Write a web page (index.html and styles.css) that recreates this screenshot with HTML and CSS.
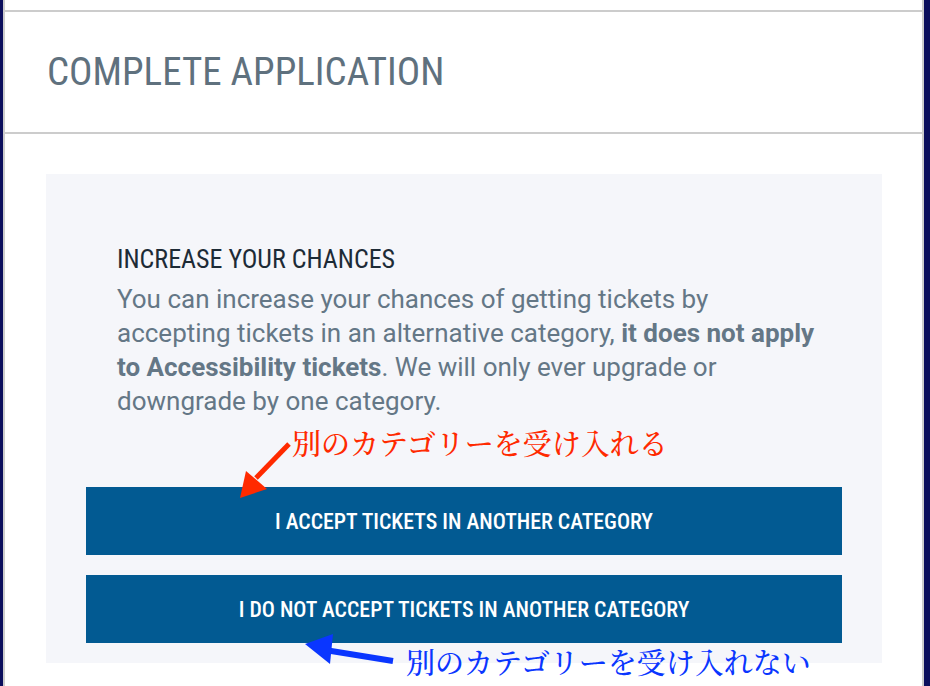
FILE: index.html
```html
<!DOCTYPE html>
<html lang="en">

<head>
  <meta charset="UTF-8">
  <meta name="viewport" content="width=device-width, initial-scale=1.0">
  <title>Complete Application</title>
  <link rel="stylesheet" href="styles.css">
</head>

<body>
  <div class="page">
    <div class="header">
      <h1 class="title">COMPLETE APPLICATION</h1>
    </div>

    <div class="panel">
      <div class="intro">
        <h2 class="intro-title">INCREASE YOUR CHANCES</h2>
        <p class="intro-text">You can increase your chances of getting tickets by<br>accepting tickets in an alternative category, <strong>it does not apply<br>to Accessibility tickets</strong>. We will only ever upgrade or<br>downgrade by one category.</p>
      </div>
      <button class="choice-btn" type="button">I ACCEPT TICKETS IN ANOTHER CATEGORY</button>
      <button class="choice-btn" type="button">I DO NOT ACCEPT TICKETS IN ANOTHER CATEGORY</button>
    </div>
  </div>

  <!-- notes drawn over the screenshot -->
  <div class="notes">
    <svg class="arrows" width="930" height="686" viewBox="0 0 930 686">
      <line x1="289" y1="444" x2="256" y2="478" stroke="#ff2a00" stroke-width="5" />
      <polygon points="240,498 246,471 267,489" fill="#ff2a00" />
      <line x1="393" y1="661" x2="325" y2="650" stroke="#0a36ff" stroke-width="6" />
      <polygon points="305,644 333,634 330,664" fill="#0a36ff" />
    </svg>
    <span class="note note-red">別のカテゴリーを受け入れる</span>
    <span class="note note-blue">別のカテゴリーを受け入れない</span>
  </div>
</body>

</html>
```

FILE: styles.css
```css
body {
  margin: 0;
  padding: 0;
  background-color: #0b0e5c;
  font-family: Roboto, "Liberation Sans", sans-serif;
  position: relative;
  height: 686px;
  overflow: hidden;
}

.page {
  margin-left: 3px;
  width: 921px;
  height: 686px;
  padding-top: 10px;
  box-sizing: border-box;
  background-color: #fff;
  border-left: 2px solid #cccccc;
  border-right: 2px solid #cccccc;
}

.header {
  height: 120px;
  border-top: 2px solid #cccccc;
  border-bottom: 2px solid #cccccc;
  display: flex;
  align-items: center;
  padding-left: 42px;
}

.title {
  margin: 0;
  font-size: 39px;
  font-weight: 400;
  font-stretch: 75%;
  color: #5f717e;
}

.panel {
  margin: 40px 40px 0 41px;
  padding: 40px 40px 20px;
  background-color: #f5f6fa;
}

.intro {
  padding: 30px 0 69px 31px;
}

.intro-title {
  margin: 0 0 8px;
  font-size: 26px;
  line-height: 30px;
  font-weight: 400;
  font-stretch: 75%;
  color: #1d2b36;
}

.intro-text {
  margin: 0;
  font-size: 26px;
  line-height: 34px;
  white-space: nowrap;
  color: #647786;
}

.intro-text strong {
  font-weight: 700;
}

.choice-btn {
  display: block;
  width: 100%;
  height: 68px;
  margin-bottom: 20px;
  border: none;
  background-color: #025a92;
  color: #fff;
  font-family: Roboto, "Liberation Sans", sans-serif;
  font-size: 21.8px;
  font-weight: 500;
  font-stretch: 75%;
  cursor: pointer;
}

.choice-btn:last-child {
  margin-bottom: 0;
}

.notes {
  position: absolute;
  top: 0;
  left: 0;
  width: 930px;
  height: 686px;
  pointer-events: none;
}

.arrows {
  position: absolute;
  top: 0;
  left: 0;
}

.note {
  position: absolute;
  font-family: "Noto Serif CJK JP", "Noto Sans CJK JP", serif;
  font-size: 29px;
  font-weight: 500;
  line-height: 1;
  white-space: nowrap;
}

.note-red {
  left: 292px;
  top: 428px;
  color: #ff2a00;
}

.note-blue {
  left: 406px;
  top: 647px;
  color: #0a36ff;
}
```
